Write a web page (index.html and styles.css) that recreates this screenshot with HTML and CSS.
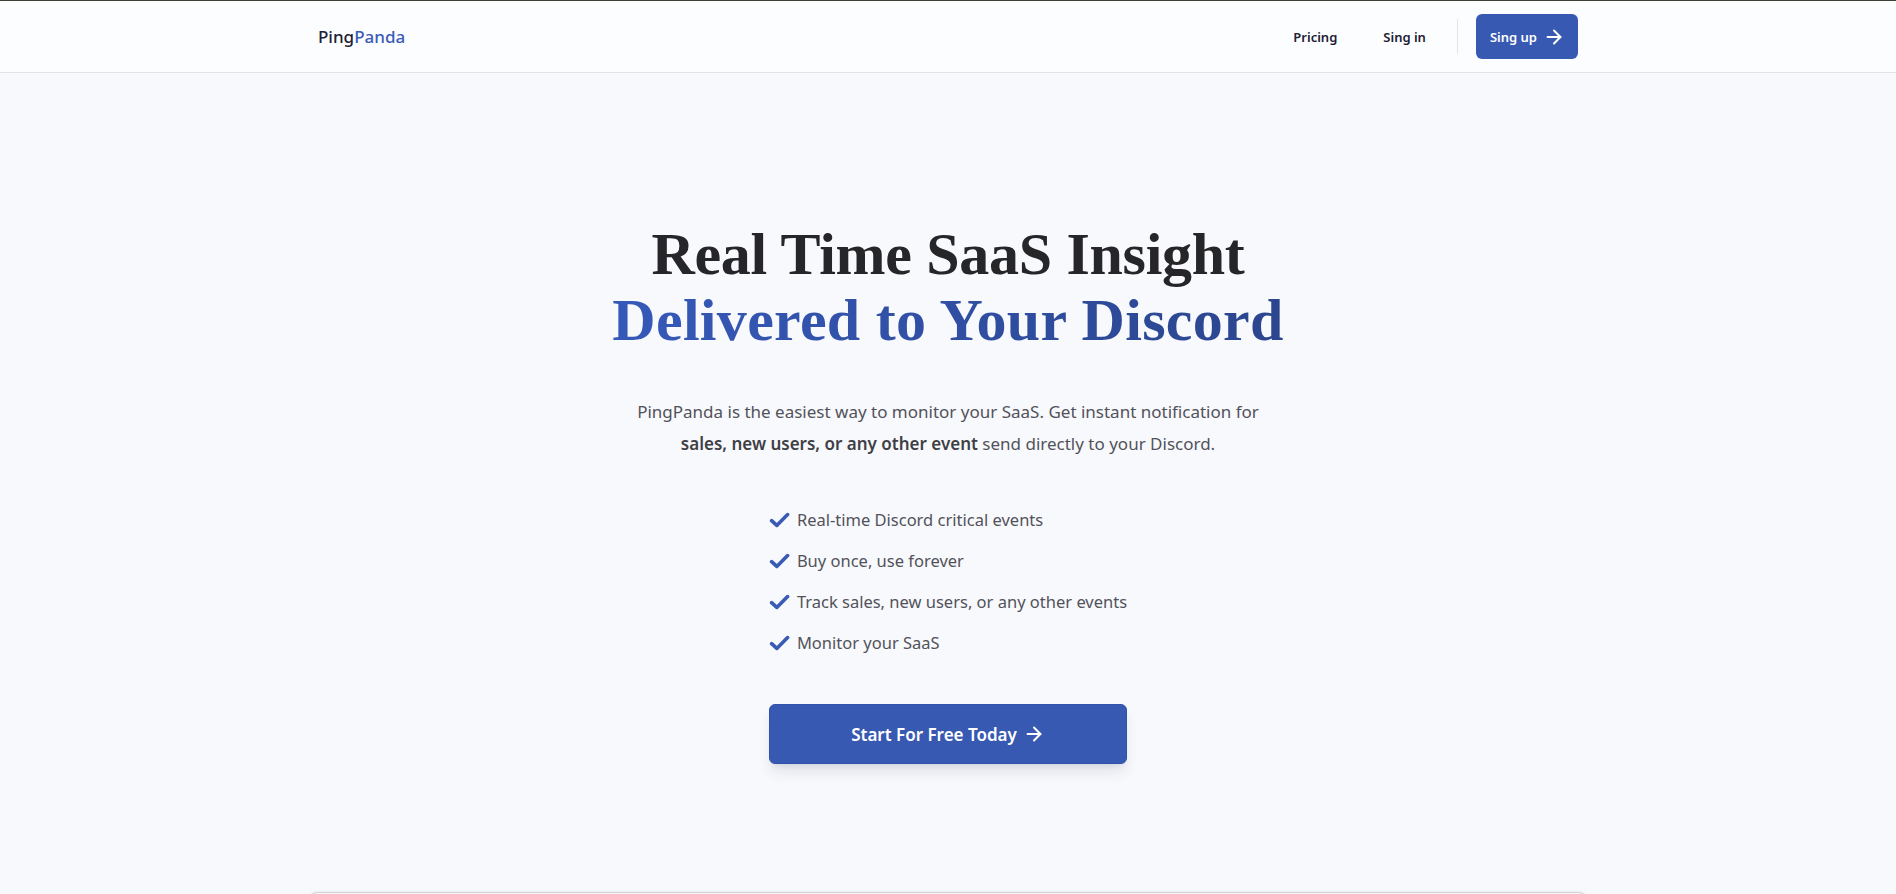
FILE: index.html
```html
<!DOCTYPE html>
<html lang="en">
<head>
<meta charset="utf-8">
<title>PingPanda</title>
<link rel="stylesheet" href="styles.css">
</head>
<body>
<header class="nav">
  <div class="container nav-inner">
    <a class="logo" href="#">Ping<span class="logo-accent">Panda</span></a>
    <nav class="nav-right">
      <a class="nav-link" href="#">Pricing</a>
      <a class="nav-link" href="#">Sing in</a>
      <span class="nav-divider"></span>
      <a class="btn btn-sm" href="#">Sing up
        <svg class="arrow" width="22" height="22" viewBox="0 0 24 24" fill="none" stroke="currentColor" stroke-width="2.2" stroke-linecap="round" stroke-linejoin="round"><path d="M5 12h14"/><path d="m12 5 7 7-7 7"/></svg>
      </a>
    </nav>
  </div>
</header>

<main class="hero">
  <h1 class="title">
    <span class="title-line">Real Time SaaS Insight</span>
    <span class="title-line title-accent">Delivered to Your Discord</span>
  </h1>
  <p class="lead">PingPanda is the easiest way to monitor your SaaS. Get instant notification for <strong>sales, new users, or any other event</strong> send directly to your Discord.</p>
  <ul class="features">
    <li class="feature">
      <svg class="check" width="21" height="16" viewBox="0 0 21 16" fill="none" stroke="currentColor" stroke-width="3.6" stroke-linecap="round" stroke-linejoin="round"><path d="M2.6 8.6 L7.8 13.4 L18.6 2.6"/></svg>
      Real-time Discord critical events
    </li>
    <li class="feature">
      <svg class="check" width="21" height="16" viewBox="0 0 21 16" fill="none" stroke="currentColor" stroke-width="3.6" stroke-linecap="round" stroke-linejoin="round"><path d="M2.6 8.6 L7.8 13.4 L18.6 2.6"/></svg>
      Buy once, use forever
    </li>
    <li class="feature">
      <svg class="check" width="21" height="16" viewBox="0 0 21 16" fill="none" stroke="currentColor" stroke-width="3.6" stroke-linecap="round" stroke-linejoin="round"><path d="M2.6 8.6 L7.8 13.4 L18.6 2.6"/></svg>
      Track sales, new users, or any other events
    </li>
    <li class="feature">
      <svg class="check" width="21" height="16" viewBox="0 0 21 16" fill="none" stroke="currentColor" stroke-width="3.6" stroke-linecap="round" stroke-linejoin="round"><path d="M2.6 8.6 L7.8 13.4 L18.6 2.6"/></svg>
      Monitor your SaaS
    </li>
  </ul>
  <a class="btn btn-lg" href="#">Start For Free Today
    <svg class="arrow" width="22" height="22" viewBox="0 0 24 24" fill="none" stroke="currentColor" stroke-width="2.2" stroke-linecap="round" stroke-linejoin="round"><path d="M5 12h14"/><path d="m12 5 7 7-7 7"/></svg>
  </a>
  <section class="preview"></section>
</main>
</body>
</html>
```

FILE: styles.css
```css
* { box-sizing: border-box; }

html, body {
  margin: 0;
  padding: 0;
}

body {
  background: #f8f9fc;
  font-family: "Noto Sans", "Open Sans", Arial, sans-serif;
  color: #27272a;
  overflow: hidden;
}

a { text-decoration: none; color: inherit; }

.container {
  max-width: 1280px;
  margin: 0 auto;
  padding: 0 10px;
}

.nav {
  background: #fcfdfe;
  border-top: 1px solid #3c4134;
  border-bottom: 1px solid #e4e4e7;
}

.nav-inner {
  height: 71px;
  display: flex;
  align-items: center;
  justify-content: space-between;
}

.logo {
  font-size: 17px;
  font-weight: 500;
  color: #1c2036;
}

.logo-accent { color: #3a5cb6; }

.nav-right {
  display: flex;
  align-items: center;
}

.nav-link {
  font-size: 13px;
  font-weight: 600;
  color: #1c2036;
  padding: 0 16px;
  line-height: 36px;
}

.nav-link + .nav-link { margin-left: 14px; }

.nav-divider {
  width: 1px;
  height: 35px;
  background: #e4e4e7;
  margin: 0 18px 0 15px;
}

.btn {
  display: inline-flex;
  align-items: center;
  justify-content: center;
  gap: 6px;
  background: #3759b2;
  color: #ffffff;
  font-weight: 600;
  border-radius: 6px;
}

.btn-sm {
  height: 45px;
  padding: 0 13px 0 14px;
  font-size: 13px;
}

.hero {
  display: flex;
  flex-direction: column;
  align-items: center;
  padding-top: 148px;
  text-align: center;
}

.title {
  margin: 0;
  font-family: "Liberation Serif", "Times New Roman", serif;
  font-weight: 700;
  font-size: 60px;
  line-height: 66px;
  color: #262628;
}

.title-line { display: block; }

.title-line:first-child { letter-spacing: -0.3px; }

.title-accent {
  letter-spacing: 0.3px;
  background: linear-gradient(90deg, #3659b9 0%, #2f4d9f 60%, #2b468e 100%);
  -webkit-background-clip: text;
  background-clip: text;
  color: transparent;
}

.lead {
  margin: 43px 0 0;
  max-width: 640px;
  font-size: 17px;
  line-height: 32px;
  color: #52525b;
}

.lead strong {
  font-weight: 600;
  color: #3f3f46;
}

.features {
  list-style: none;
  margin: 46px 0 0;
  padding: 0;
  display: flex;
  flex-direction: column;
  gap: 13px;
  text-align: left;
}

.feature {
  display: flex;
  align-items: center;
  gap: 7px;
  font-size: 16.5px;
  line-height: 28px;
  color: #52525b;
}

.check {
  color: #3a5bb5;
  flex-shrink: 0;
}

.btn-lg {
  margin-top: 47px;
  width: 358px;
  height: 60px;
  font-size: 17px;
  box-shadow: 0 10px 15px -3px rgba(30, 40, 80, 0.12), 0 4px 6px -4px rgba(30, 40, 80, 0.12);
  border: 1px solid #3253a8;
}

.preview {
  margin-top: 128px;
  width: 1278px;
  height: 300px;
  border: 1px solid #d4d4d8;
  border-radius: 8px;
  background: #f4f5f8;
  box-shadow: 0 -1px 2px rgba(0,0,0,0.05);
}
```
